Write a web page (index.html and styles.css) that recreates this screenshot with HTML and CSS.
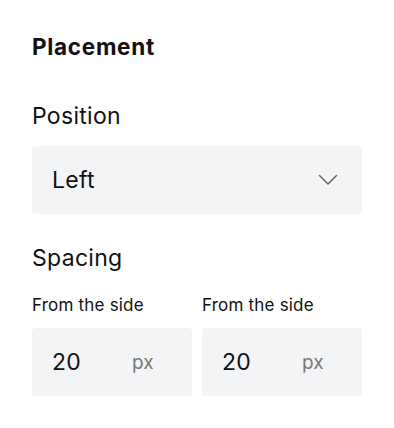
FILE: index.html
```html
<!DOCTYPE html>
<html>
<head>
<meta charset="utf-8">
<link rel="stylesheet" href="styles.css">
</head>
<body>
<div class="panel">
  <h1 class="title">Placement</h1>
  <div class="group">
    <div class="label">Position</div>
    <div class="select">
      <span class="select-value">Left</span>
      <svg class="chevron" width="20" height="12" viewBox="0 0 20 12"><path d="M1.5 1.5 L10 10 L18.5 1.5" fill="none" stroke="#6b6b6b" stroke-width="1.6" stroke-linecap="round" stroke-linejoin="round"/></svg>
    </div>
  </div>
  <div class="group">
    <div class="label">Spacing</div>
    <div class="fields">
      <div class="field">
        <div class="sublabel">From the side</div>
        <div class="input"><span class="num">20</span><span class="unit">px</span></div>
      </div>
      <div class="field">
        <div class="sublabel">From the side</div>
        <div class="input"><span class="num">20</span><span class="unit">px</span></div>
      </div>
    </div>
  </div>
</div>
</body>
</html>
```
FILE: styles.css
```css
html, body { margin: 0; padding: 0; background: #fff; }
body { font-family: Inter, "Noto Sans", sans-serif; color: #111; }
.panel { width: 330px; padding: 32px 32px 0 32px; }
.title { margin: 0; font-size: 22.5px; font-weight: 700; line-height: 30px; letter-spacing: 0.7px; }
.group { margin-top: 38px; }
.group + .group { margin-top: 28px; }
.label { font-size: 23px; line-height: 32px; font-weight: 400; letter-spacing: 0.3px; }
.select { margin-top: 14px; height: 68px; background: #f3f4f6; border-radius: 4px; display: flex; align-items: center; justify-content: space-between; padding: 0 24px 0 20px; }
.select-value { font-size: 23px; letter-spacing: 0.3px; }
.chevron { display: block; }
.fields { margin-top: 19px; display: flex; gap: 10px; }
.field { flex: 1; }
.sublabel { font-size: 17px; line-height: 24px; letter-spacing: 0.2px; }
.input { margin-top: 11px; height: 68px; background: #f3f4f6; border-radius: 4px; display: flex; align-items: center; padding: 0 20px; }
.num { font-size: 23px; width: 80px; letter-spacing: 0.3px; }
.unit { font-size: 19px; color: #777; }
```
